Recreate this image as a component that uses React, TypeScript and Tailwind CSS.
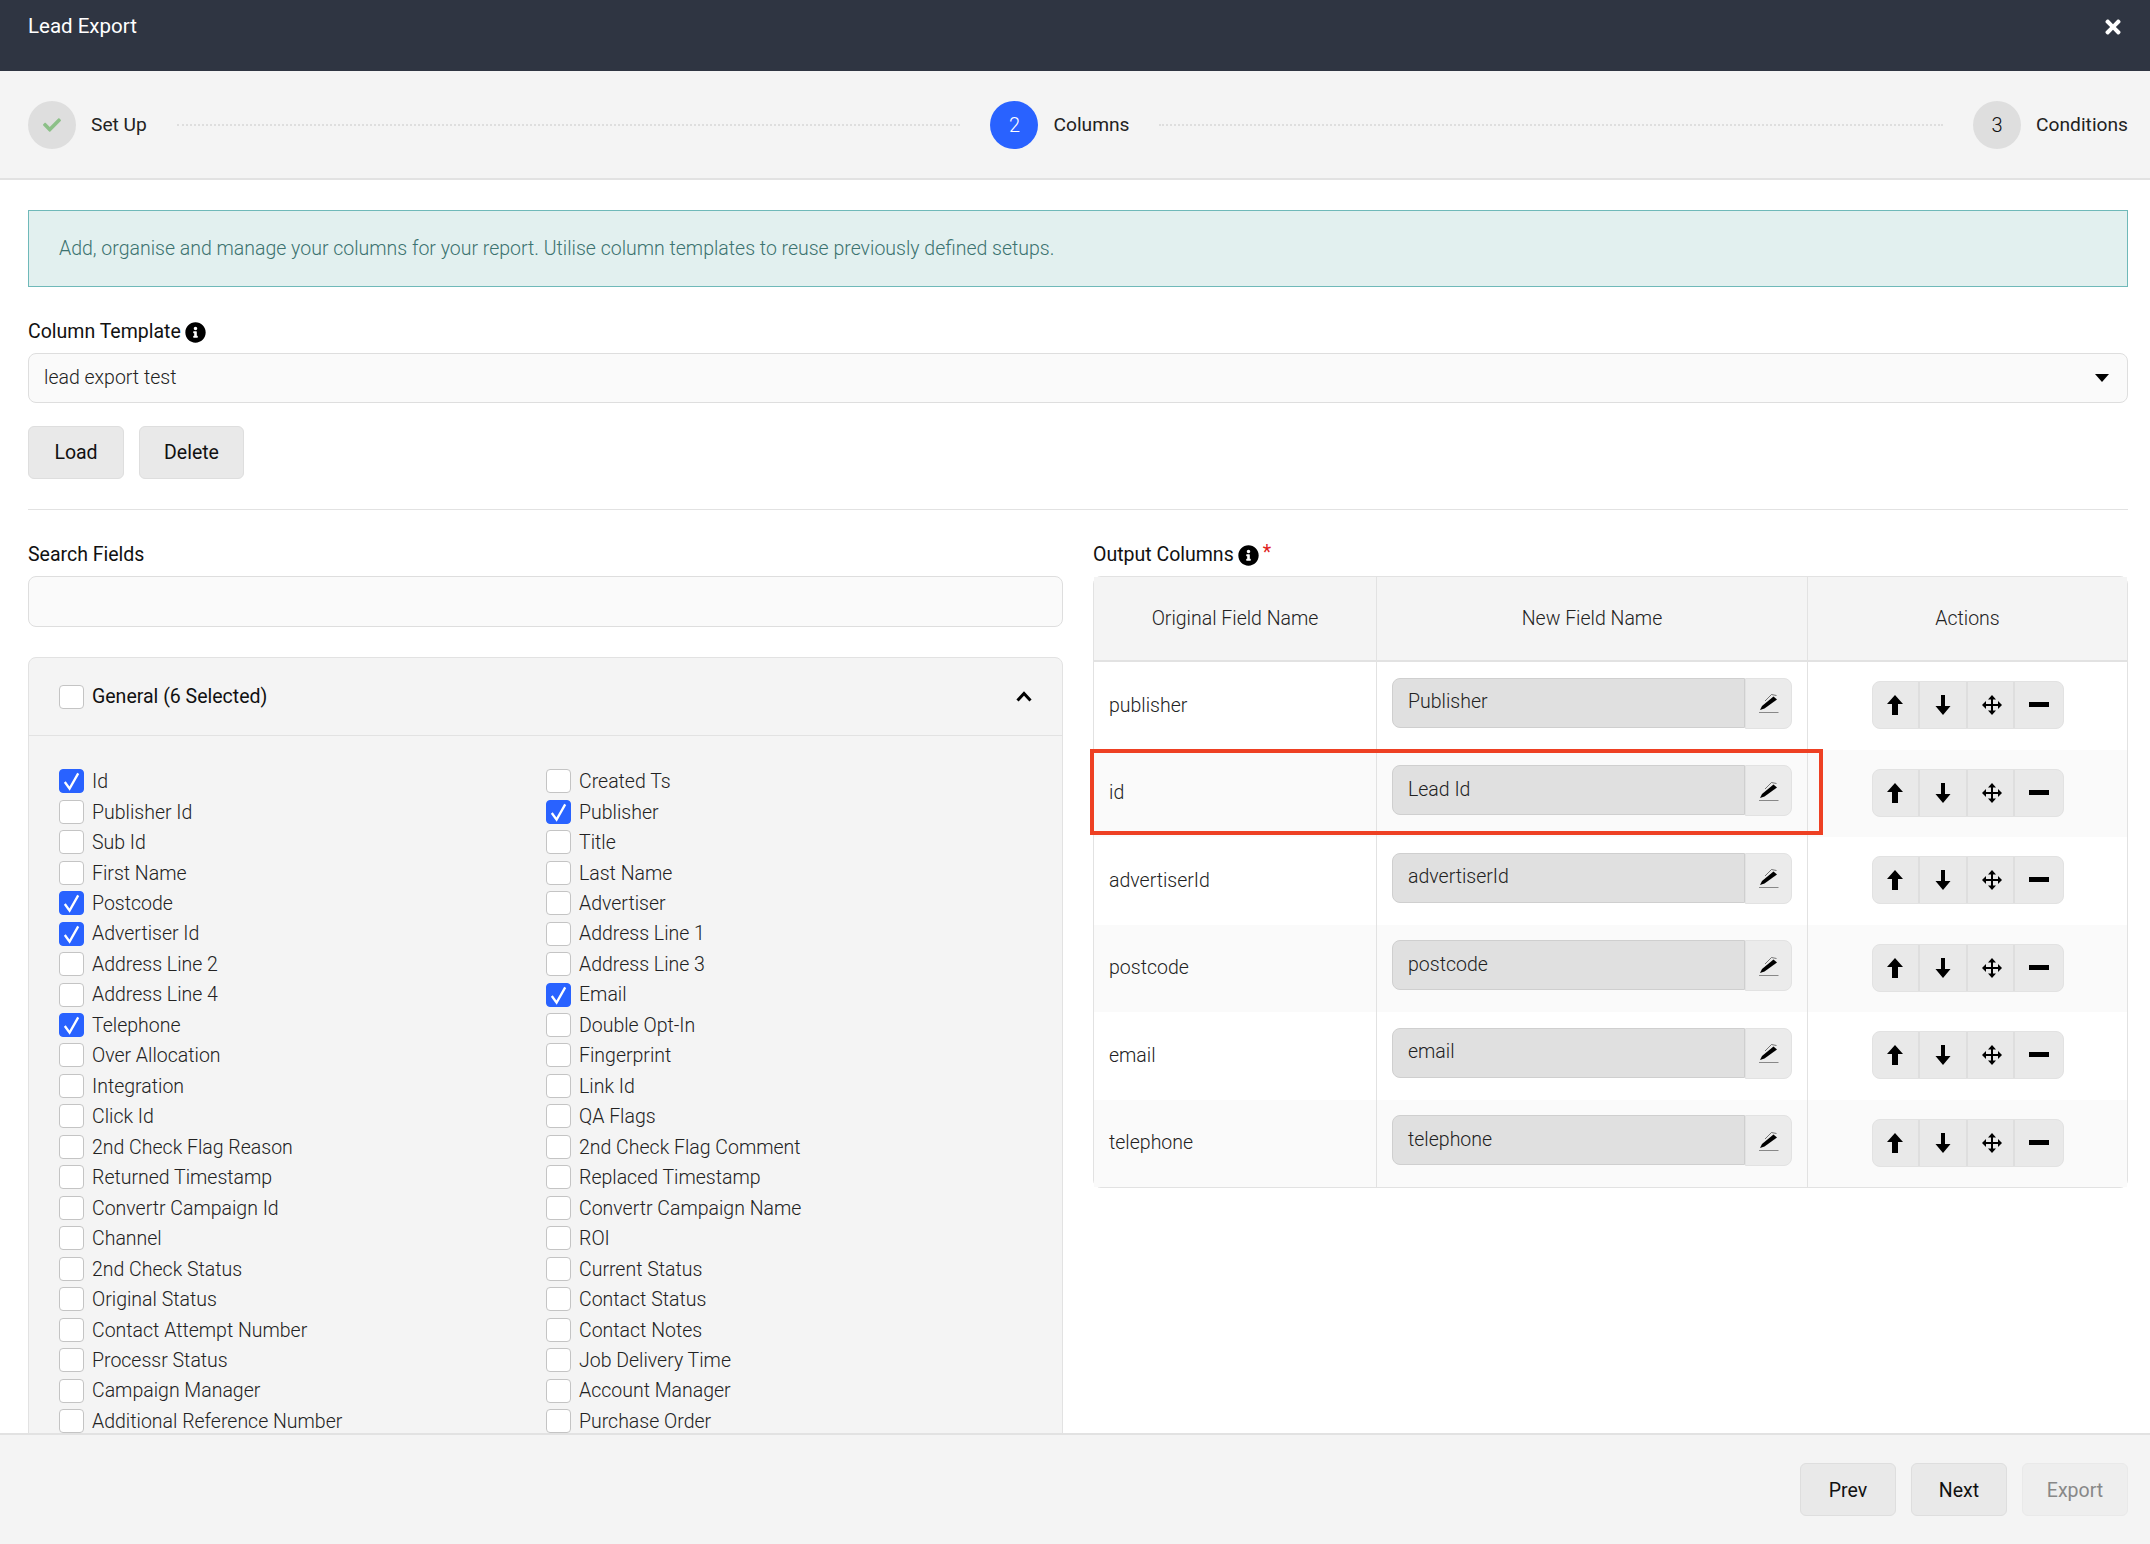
import { FaCheck, FaInfoCircle, FaTimes } from "react-icons/fa";

const leftFields: [string, boolean][] = [
  ["Id", true],
  ["Publisher Id", false],
  ["Sub Id", false],
  ["First Name", false],
  ["Postcode", true],
  ["Advertiser Id", true],
  ["Address Line 2", false],
  ["Address Line 4", false],
  ["Telephone", true],
  ["Over Allocation", false],
  ["Integration", false],
  ["Click Id", false],
  ["2nd Check Flag Reason", false],
  ["Returned Timestamp", false],
  ["Convertr Campaign Id", false],
  ["Channel", false],
  ["2nd Check Status", false],
  ["Original Status", false],
  ["Contact Attempt Number", false],
  ["Processr Status", false],
  ["Campaign Manager", false],
  ["Additional Reference Number", false],
];

const rightFields: [string, boolean][] = [
  ["Created Ts", false],
  ["Publisher", true],
  ["Title", false],
  ["Last Name", false],
  ["Advertiser", false],
  ["Address Line 1", false],
  ["Address Line 3", false],
  ["Email", true],
  ["Double Opt-In", false],
  ["Fingerprint", false],
  ["Link Id", false],
  ["QA Flags", false],
  ["2nd Check Flag Comment", false],
  ["Replaced Timestamp", false],
  ["Convertr Campaign Name", false],
  ["ROI", false],
  ["Current Status", false],
  ["Contact Status", false],
  ["Contact Notes", false],
  ["Job Delivery Time", false],
  ["Account Manager", false],
  ["Purchase Order", false],
];

const columns = [
  ["publisher", "Publisher"],
  ["id", "Lead Id"],
  ["advertiserId", "advertiserId"],
  ["postcode", "postcode"],
  ["email", "email"],
  ["telephone", "telephone"],
];

function Checkbox({ checked }: { checked?: boolean }) {
  return (
    <span
      className={
        "flex h-[24px] w-[25px] shrink-0 items-center justify-center rounded-[4px] border " +
        (checked ? "border-[#2962ff] bg-[#2962ff]" : "border-[#c4c4c4] bg-white")
      }
    >
      {checked && (
        <svg viewBox="0 0 24 24" className="h-[24px] w-[24px]" fill="none" stroke="white" strokeWidth="2.4">
          <path d="M5 13l5 7 9-16" />
        </svg>
      )}
    </span>
  );
}

function Step({ mark, label, state }: { mark: React.ReactNode; label: string; state: "done" | "active" | "todo" }) {
  return (
    <div className="flex shrink-0 items-center gap-[15px]">
      <span
        className={
          "flex h-[48px] w-[48px] items-center justify-center rounded-full text-[20px] font-light " +
          (state === "active" ? "bg-[#2962ff] text-white" : "bg-[#dedede] text-[#111]")
        }
      >
        {mark}
      </span>
      <span className="pt-[1px] text-[19.2px] text-[#222]">{label}</span>
    </div>
  );
}

function IconButton({ children, last }: { children: React.ReactNode; last?: boolean }) {
  return (
    <span
      className={
        "flex h-full w-[48px] items-center justify-center " + (last ? "" : "border-r-2 border-[#dedede]")
      }
    >
      {children}
    </span>
  );
}

function ActionGroup() {
  return (
    <div className="-mt-[1px] flex h-[48px] w-[192px] rounded-[8px] border border-[#e2e2e2] bg-[#e9e9e9]">
      <IconButton>
        <svg width="18" height="20" viewBox="0 0 18 20">
          <path d="M9 0l8 9h-5v11H6V9H1z" fill="black" />
        </svg>
      </IconButton>
      <IconButton>
        <svg width="18" height="20" viewBox="0 0 18 20">
          <path d="M7 0h4v11h5.500L9 20 1.500 11H7z" fill="black" />
        </svg>
      </IconButton>
      <IconButton>
        <svg className="ml-[3px]" width="20" height="20" viewBox="0 0 20 20">
          <path
            d="M10 0l4 4.500h-3V9h5V6l4 4-4 4v-3h-5v4.500h3l-4 4.500-4-4.500h3V11H4v3l-4-4 4-4v3h5V4.500H6z"
            fill="black"
          />
        </svg>
      </IconButton>
      <IconButton last>
        <svg width="20" height="6" viewBox="0 0 20 6">
          <rect width="20" height="5" fill="black" />
        </svg>
      </IconButton>
    </div>
  );
}

function PencilIcon() {
  return (
    <svg width="20" height="20" viewBox="0 0 20 20">
      <path d="M6 8l6.500-6.500 5 1" fill="none" stroke="#444" strokeWidth="0.7" />
      <path d="M1 17L3 13 14.500 3.500l3.500 3L5.500 15.500z" fill="black" />
      <path d="M0 19.500h19.500" stroke="#888" strokeWidth="1" />
    </svg>
  );
}

function InfoIcon() {
  return <FaInfoCircle className="h-[21px] w-[21px] text-black" />;
}

function FieldList({ fields, className }: { fields: [string, boolean][]; className: string }) {
  return (
    <div className={className}>
      {fields.map(([name, checked]) => (
        <div key={name} className="flex h-[30.48px] items-center gap-[8px] font-light text-[#222]">
          <Checkbox checked={checked} />
          <span className="pt-[1px]">{name}</span>
        </div>
      ))}
    </div>
  );
}

export default function App() {
  return (
    <div className="flex h-[1544px] w-[2150px] flex-col overflow-hidden bg-white font-['Roboto',sans-serif] text-[19.5px]">
      <header className="flex h-[71px] shrink-0 items-start justify-between bg-[#2f3542] pl-[28px] pr-[28px] pt-[11px] text-white">
        <span className="text-[20.5px]">Lead Export</span>
        <FaTimes className="mt-[5px] h-[22px] w-[18px]" />
      </header>

      <div className="flex h-[109px] shrink-0 items-center gap-[30px] border-b-2 border-[#e2e2e2] bg-[#f4f4f4] pl-[28px] pr-[22px]">
        <Step state="done" label="Set Up" mark={<FaCheck className="h-[18px] w-[20px] text-[#8cc088]" />} />
        <div className="flex-1 border-t-2 border-dotted border-[#dedede]" />
        <Step state="active" label="Columns" mark="2" />
        <div className="flex-1 border-t-2 border-dotted border-[#dedede]" />
        <Step state="todo" label="Conditions" mark="3" />
      </div>

      <main className="min-h-0 flex-1 overflow-hidden pl-[28px] pr-[22px] pt-[30px]">
        <div className="flex h-[77px] items-center border border-[#6fb9b9] bg-[#e2f0ef] px-[30px] pt-[1px] font-light text-[#3c7370]">
          Add, organise and manage your columns for your report. Utilise column templates to reuse previously defined setups.
        </div>

        <div className="mt-[33px] flex h-[24px] items-center gap-[4px] text-[#111]">
          Column Template <InfoIcon />
        </div>
        <div className="mt-[9px] flex h-[50px] items-center justify-between rounded-[8px] border border-[#dedede] bg-[#fafafa] pl-[15px] pr-[18px] font-light text-[#222]">
          lead export test
          <svg width="14" height="8" viewBox="0 0 14 8">
            <path d="M0 0h14L7 8z" fill="black" />
          </svg>
        </div>
        <div className="mt-[23px] flex gap-[15px]">
          <button className="h-[53px] w-[96px] rounded-[6px] border border-[#dedede] bg-[#e9e9e9] pt-[1px] text-[#111]">Load</button>
          <button className="h-[53px] w-[105px] rounded-[6px] border border-[#dedede] bg-[#e9e9e9] pt-[1px] text-[#111]">Delete</button>
        </div>
        <div className="mt-[30px] border-t border-[#e2e2e2]" />

        <div className="mt-[33px] flex gap-[30px]">
          <section className="w-[1035px] shrink-0">
            <div className="flex h-[24px] items-center text-[#111]">Search Fields</div>
            <div className="mt-[9px] h-[51px] rounded-[8px] border border-[#dedede] bg-[#fafafa]" />
            <div className="mt-[30px] rounded-t-[8px] border border-[#e2e2e2] bg-[#f4f4f4]">
              <div className="flex h-[78px] items-center gap-[8px] border-b border-[#e2e2e2] pl-[30px] pr-[30px] text-[#111]">
                <Checkbox />
                <span className="flex-1 pt-[1px]">General (6 Selected)</span>
                <svg width="16" height="11" viewBox="0 0 16 11" fill="none" stroke="black" strokeWidth="3">
                  <path d="M1.500 9.500L8 2.500l6.500 7" />
                </svg>
              </div>
              <div className="flex pl-[30px] pt-[30px]">
                <FieldList fields={leftFields} className="w-[487px] shrink-0" />
                <FieldList fields={rightFields} className="flex-1" />
              </div>
            </div>
          </section>

          <section className="min-w-0 flex-1">
            <div className="flex h-[24px] items-center gap-[4px] text-[#111]">
              Output Columns <InfoIcon />
              <span className="-mt-[4px] text-[#e0211c]">*</span>
            </div>
            <div className="relative mt-[9px] rounded-[8px] border border-[#e2e2e2]">
              <div className="grid h-[85px] grid-cols-[282px_431px_1fr] items-stretch border-b-2 border-[#e2e2e2] bg-[#f4f4f4] text-center font-light text-[#222]">
                <span className="flex items-center justify-center pt-[1px]">Original Field Name</span>
                <span className="flex items-center justify-center border-l border-[#e2e2e2] pt-[1px]">New Field Name</span>
                <span className="flex items-center justify-center border-l border-[#e2e2e2] pt-[1px]">Actions</span>
              </div>
              {columns.map(([original, name], i) => (
                <div
                  key={original}
                  className={
                    "grid h-[87.5px] grid-cols-[282px_431px_1fr] items-stretch font-light text-[#222] " +
                    (i % 2 === 1 ? "bg-[#fafafa]" : "bg-white")
                  }
                >
                  <span className="flex items-center pb-[1px] pl-[15px]">{original}</span>
                  <div className="flex items-center border-l border-[#e2e2e2] px-[15px]">
                    <div className="-mt-[6px] flex h-[50px] flex-1 items-center rounded-l-[8px] border border-[#cfcfcf] bg-[#e0e0e0] pb-[2px] pl-[15px]">
                      {name}
                    </div>
                    <div className="-mt-[5px] flex h-[51px] w-[47px] items-center justify-center rounded-r-[8px] border border-[#e2e2e2] bg-[#ebebeb]">
                      <PencilIcon />
                    </div>
                  </div>
                  <div className="flex items-center justify-center border-l border-[#e2e2e2]">
                    <ActionGroup />
                  </div>
                </div>
              ))}
              <div className="absolute left-[-4px] top-[172px] h-[86px] w-[733px] border-[4px] border-[#ee4023]" />
            </div>
          </section>
        </div>
      </main>

      <footer className="flex h-[111px] shrink-0 items-center justify-end gap-[15px] border-t-2 border-[#e2e2e2] bg-[#f4f4f4] px-[22px]">
        <button className="h-[53px] w-[96px] rounded-[6px] border border-[#dedede] bg-[#e9e9e9] pt-[2px] text-[#111]">Prev</button>
        <button className="h-[53px] w-[96px] rounded-[6px] border border-[#dedede] bg-[#e9e9e9] pt-[2px] text-[#111]">Next</button>
        <button className="h-[53px] w-[106px] rounded-[6px] border border-[#e9e9e9] bg-[#eeeeee] pt-[2px] text-[#888]">Export</button>
      </footer>
    </div>
  );
}
